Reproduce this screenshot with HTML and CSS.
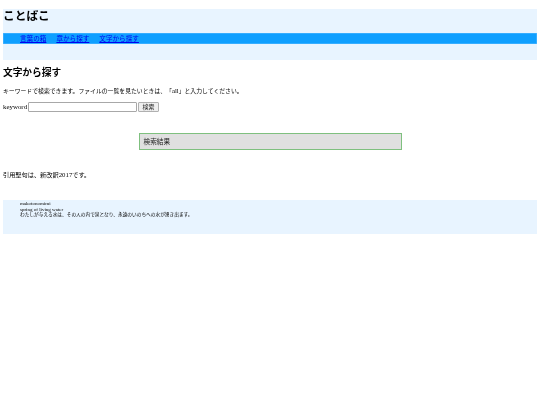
FILE: index.html
```html
<!DOCTYPE html>
<html lang="ja">
<head>
<meta charset="utf-8">
<title>ことばこ</title>
<link rel="stylesheet" href="styles.css">
</head>
<body>
<header class="site-header">
  <h1 class="site-title">ことばこ</h1>
  <nav class="site-nav">
    <a href="#">言葉の箱</a>
    <a href="#">章から探す</a>
    <a href="#">文字から探す</a>
  </nav>
</header>
<main class="main">
  <h2 class="page-title">文字から探す</h2>
  <p class="lead">キーワードで検索できます。ファイルの一覧を見たいときは、「<span class="latin">all</span>」と入力してください。</p>
  <form class="search">
    <label class="search-label" for="kw">keyword</label>
    <input class="search-input" id="kw" type="text">
    <button class="search-button" type="button">検索</button>
  </form>
  <div class="results">検索結果</div>
  <p class="note">引用聖句は、新改訳<span class="latin">2017</span>です。</p>
</main>
<footer class="site-footer">
  <div class="latin-small">makotonomimi</div>
  <div class="latin-small">spring of living water</div>
  <div>わたしが与える水は、その人の内で泉となり、永遠のいのちへの水が湧き出ます。</div>
</footer>
</body>
</html>
```
FILE: styles.css
```css
html, body { margin: 0; padding: 0; }
body {
  padding: 9px 3px 0;
  background: #fff;
  color: #000;
  font-family: "Liberation Serif", "Noto Sans CJK JP", serif;
  font-size: 5.85px;
  line-height: 8px;
  filter: blur(0.3px);
}
.latin { font-size: 6.8px; }
.site-header {
  height: 51px;
  display: flex;
  flex-direction: column;
  background: #e8f4ff;
}
.site-title {
  margin: 0;
  height: 24px;
  font-size: 11.7px;
  line-height: 15px;
  font-weight: 700;
}
.site-nav {
  height: 11px;
  display: flex;
  align-items: center;
  gap: 10px;
  padding-left: 17px;
  background: #0f9fff;
  box-shadow: inset 0 0 0 0.5px #5cbcff;
  font-size: 6.6px;
}
.site-nav a { color: #0000ee; text-decoration: underline; }
.main { display: flow-root; }
.page-title {
  margin: 7px 0 0;
  font-size: 9.7px;
  line-height: 12px;
  font-weight: 700;
}
.lead { margin: 8px 0 0; line-height: 8px; }
.search {
  display: flex;
  align-items: center;
  gap: 1px;
  margin-top: 7px;
  height: 10px;
}
.search-label { font-size: 6.9px; }
.search-input {
  box-sizing: border-box;
  width: 109px;
  height: 10px;
  margin: 0;
  padding: 0;
  background: #fff;
  border: 1px solid #a8a8a8;
  border-radius: 1px;
}
.search-button {
  box-sizing: border-box;
  height: 10px;
  width: 21px;
  padding: 0;
  font: 6px/8px "Liberation Sans", "Noto Sans CJK JP", sans-serif;
  color: #222;
  background: #efefef;
  border: 1px solid #b0b0b0;
  border-radius: 1px;
}
.results {
  box-sizing: border-box;
  width: 263px;
  height: 17px;
  margin: 21px auto 0;
  padding: 4px 4px 3px;
  background: #e0e0e0;
  border: 1px solid #7fc07f;
  color: #222;
  font-size: 6.7px;
}
.note { margin: 21px 0 0; font-size: 6.2px; }
.site-footer {
  box-sizing: border-box;
  height: 34px;
  margin-top: 21px;
  padding: 1px 17px 0;
  background: #e8f4ff;
  font-size: 4.7px;
  line-height: 5.5px;
}
.latin-small { font-size: 5px; }
```
